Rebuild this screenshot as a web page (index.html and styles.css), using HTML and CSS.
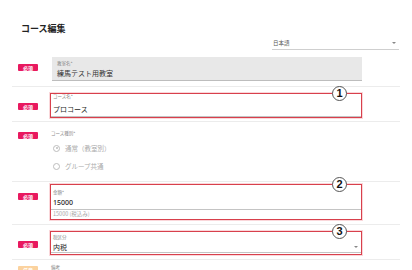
FILE: index.html
```html
<!DOCTYPE html>
<html lang="ja">
<head>
<meta charset="utf-8">
<link rel="stylesheet" href="styles.css">
</head>
<body>
<div class="page">
  <h1 class="title">コース編集</h1>
  <div class="lang-row">
    <div class="lang"><span>日本語</span><span class="caret"></span></div>
  </div>

  <div class="row r1">
    <div class="badge-col"><span class="badge req b1">必須</span></div>
    <div class="content">
      <div class="field readonly">
        <div class="label">教室名*</div>
        <div class="value">練馬テスト用教室</div>
      </div>
    </div>
  </div>

  <div class="row r2">
    <div class="badge-col"><span class="badge req">必須</span></div>
    <div class="content">
      <div class="mark f2">
        <div class="label">コース名*</div>
        <div class="value">プロコース</div>
        <div class="line"></div>
        <span class="num">1</span>
      </div>
    </div>
  </div>

  <div class="row r3">
    <div class="badge-col"><span class="badge req">必須</span></div>
    <div class="content radios">
      <div class="label">コース種別*</div>
      <div class="radio on"><span class="dot"></span><span>通常（教室別）</span></div>
      <div class="radio"><span class="dot"></span><span>グループ共通</span></div>
    </div>
  </div>

  <div class="row r4">
    <div class="badge-col"><span class="badge req b4">必須</span></div>
    <div class="content">
      <div class="mark f4">
        <div class="label">金額*</div>
        <div class="value">15000</div>
        <div class="line"></div>
        <div class="helper">15000 (税込み)</div>
        <span class="num">2</span>
      </div>
    </div>
  </div>

  <div class="row r5">
    <div class="badge-col"><span class="badge req">必須</span></div>
    <div class="content">
      <div class="mark f5">
        <div class="label">税区分</div>
        <div class="value select">内税<span class="caret"></span></div>
        <div class="line"></div>
        <span class="num">3</span>
      </div>
    </div>
  </div>

  <div class="row r6">
    <div class="badge-col"><span class="badge opt b6">任意</span></div>
    <div class="content">
      <div class="label l6">備考</div>
    </div>
  </div>
</div>
</body>
</html>
```

FILE: styles.css
```css
html, body {
  margin: 0;
  padding: 0;
  background: #fff;
}
body {
  font-family: "Noto Sans CJK JP", "Noto Sans", sans-serif;
  color: #222;
  overflow: hidden;
  height: 270px;
}
.page {
  margin-left: 12px;
  width: 388px;
}
.title {
  margin: 0;
  padding-top: 22px;
  font-size: 9px;
  line-height: 13px;
  font-weight: 700;
  color: #222;
  padding-left: 9px;
}
.lang-row {
  display: flex;
  justify-content: flex-end;
}
.lang {
  width: 127px;
  margin-right: 1px;
  display: flex;
  justify-content: space-between;
  align-items: center;
  padding-top: 2px;
  height: 12px;
  border-bottom: 1px solid #cfcfcf;
  font-size: 5.5px;
  color: #555;
}
.lang span:first-child { padding-left: 1px; }
.caret {
  width: 0;
  height: 0;
  border-left: 2px solid transparent;
  border-right: 2px solid transparent;
  border-top: 2px solid #888;
  margin-right: 3px;
}
.row {
  display: flex;
  border-bottom: 1px solid #ececec;
}
.badge-col {
  width: 38px;
  padding-left: 6px;
  box-sizing: border-box;
  flex: none;
}
.badge {
  display: block;
  width: 20px;
  height: 7px;
  border-radius: 1px;
  margin-top: 10px;
  font-size: 5px;
  font-weight: 700;
  line-height: 7px;
  text-align: center;
  color: #fff;
}
.req { background: #e8195f; }
.opt { background: #fbd29e; color: #fff; }
.b1 { margin-top: 7px; }
.b4 { margin-top: 9px; }
.b6 { margin-top: 6px; }
.content {
  width: 312px;
  flex: none;
}
.label {
  font-size: 4.5px;
  line-height: 5px;
  color: #8a8a8a;
}
.value {
  font-size: 7px;
  line-height: 10px;
  color: #1e1e1e;
}
.line {
  height: 1px;
  background: #c4c4c4;
}
.r1 { padding: 7px 0 5px; }
.r1 .content { padding-left: 2px; width: 310px; }
.field.readonly {
  background: #e8e8e8;
  border-bottom: 1px solid #bdbdbd;
  height: 24px;
  box-sizing: border-box;
  padding: 3px 5px 0;
}
.field.readonly .label { line-height: 6px; }
.field.readonly .value { margin-top: 2px; color: #333; }

.mark {
  position: relative;
  border: 1px solid #d8404c;
  box-shadow: 0 0 0 1px rgba(240, 140, 150, 0.35);
  box-sizing: border-box;
}
.mark .label, .mark .value, .mark .helper { padding-left: 2px; }
.num {
  position: absolute;
  right: 14px;
  top: -8px;
  width: 15px;
  height: 15px;
  box-sizing: border-box;
  border: 1px solid #555;
  border-radius: 50%;
  background: #fff;
  font-family: "Liberation Sans", sans-serif;
  font-weight: 700;
  font-size: 11px;
  line-height: 13px;
  text-align: center;
  color: #111;
}
.r2 { padding: 6px 0 3px; }
.f2 { height: 25px; }
.f2 .value { margin-top: 5px; }
.f2 .line { margin-top: 2px; }

.r3 { padding: 0; }
.radios { padding: 8px 0 9px; }
.radios .label { line-height: 6px; padding-left: 1px; }
.radio {
  display: flex;
  align-items: center;
  height: 12px;
  margin-top: 6px;
  padding-left: 3px;
  font-size: 6.5px;
  color: #ababab;
}
.radio .dot {
  width: 7px;
  height: 7px;
  box-sizing: border-box;
  border: 1px solid #bdbdbd;
  border-radius: 50%;
  margin-right: 5px;
  position: relative;
  flex: none;
}
.radio.on .dot::after {
  content: "";
  position: absolute;
  left: 1.5px;
  top: 1.5px;
  width: 2px;
  height: 2px;
  border-radius: 50%;
  background: #bdbdbd;
}

.r4 { padding: 2px 0 4px; }
.f4 { height: 36px; padding-top: 4px; }
.f4 .label { line-height: 6px; }
.f4 .value { margin-top: 3px; font-family: "Noto Sans", sans-serif; font-weight: 500; }
.f4 .line { margin-top: 1px; }
.helper {
  margin-top: 1px;
  font-size: 5.5px;
  line-height: 7px;
  color: #a8a8a8;
}

.r5 { padding: 6px 0 4px; }
.f5 { height: 24px; padding-top: 3px; }
.f5 .value { margin-top: 2px; display: flex; justify-content: space-between; align-items: center; }
.f5 .value .caret { margin-right: 3px; }

.r6 { border-bottom: none; height: 20px; }
.l6 { margin-top: 5px; padding-left: 1px; }
```
